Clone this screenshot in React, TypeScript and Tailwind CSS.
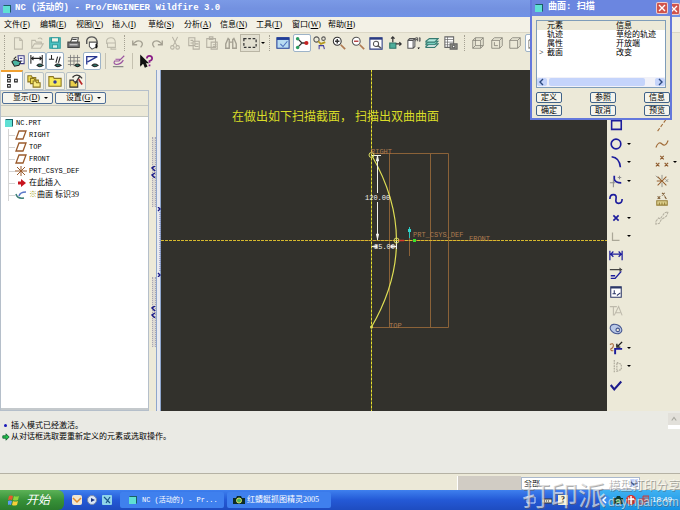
import type { ReactNode } from "react";

const FONT = "font-['Liberation_Serif','Noto_Sans_CJK_SC',sans-serif]";
const MONO = "font-['Liberation_Mono','Noto_Sans_CJK_SC',monospace]";

const MENUS = [
  ["文件", "F"],
  ["编辑", "E"],
  ["视图", "V"],
  ["插入", "I"],
  ["草绘", "S"],
  ["分析", "A"],
  ["信息", "N"],
  ["工具", "T"],
  ["窗口", "W"],
  ["帮助", "H"],
];

// Every toolbar glyph is drawn on a 16x16 grid
function Glyph({ children, color = "#555" }: { children: ReactNode; color?: string }) {
  return (
    <svg viewBox="0 0 16 16" className="size-3.5" fill="none" stroke={color} strokeWidth="1.2">
      {children}
    </svg>
  );
}

const ICONS: Record<string, ReactNode> = {
  new: <Glyph color="#bdbaab"><path d="M4 2h6l3 3v10H4zM10 2v3h3" /></Glyph>,
  open: <Glyph color="#bdbaab"><path d="M2 14V5h4l1 2h6v2M2 14l3-5h10l-3 5zM9 3q3-2 5 1" /></Glyph>,
  save: (
    <Glyph color="#2f9c9c">
      <path d="M2 2h12v12H2z" fill="#4cc4c4" />
      <path d="M4 2h8v5H4z" fill="#f3f3e6" />
      <path d="M5 10h6v4H5z" fill="#d9efe8" />
    </Glyph>
  ),
  print: (
    <Glyph color="#444">
      <path d="M4 7l2-5h7l-1 5" fill="#fff" />
      <path d="M1 7h13v6H1z" fill="#77777a" />
      <path d="M3 10h9M3 15h10" stroke="#ddd" />
      <path d="M6 4h5" />
    </Glyph>
  ),
  mail: (
    <Glyph color="#555">
      <path d="M2 9V5q1-4 6-4 6 0 6 8" strokeWidth="1.6" />
      <path d="M5 7h8l1 5-6 3-3-3z" fill="#fff" />
      <path d="M13 9v5" stroke="#111" strokeWidth="2" />
    </Glyph>
  ),
  link: <Glyph color="#bdbaab"><path d="M3 9V5q1-3 5-3 5 0 5 6M4 8h9v5H4zM8 13v2h6" /></Glyph>,
  undo: <Glyph color="#a39f91"><path d="M2 5v5h5M2 10q4-6 9-4 4 3 0 7" strokeWidth="1.5" /></Glyph>,
  redo: <Glyph color="#a39f91"><path d="M14 5v5H9M14 10Q10 4 5 6q-4 3 0 7" strokeWidth="1.5" /></Glyph>,
  cut: (
    <Glyph color="#b4b0a2">
      <path d="M5 1l5 10M11 1L6 11" />
      <circle cx="5" cy="13" r="2" />
      <circle cx="11" cy="13" r="2" />
    </Glyph>
  ),
  copy: <Glyph color="#b4b0a2"><path d="M2 2h7v9H2zM7 6h7v9H7zM9 9h4M9 12h4M4 5h3M4 8h3" /></Glyph>,
  paste: <Glyph color="#b4b0a2"><path d="M2 3h10v10H2zM5 1h4v3H5zM7 7h7v8H7zM9 10h4M9 12h4" /></Glyph>,
  find: (
    <Glyph color="#a5a193">
      <path d="M5 2L2 9v5h4V3M11 2l3 7v5h-4V3M6 7h4" strokeWidth="1.6" />
    </Glyph>
  ),
  box: <Glyph color="#333"><path d="M1 3h14v10H1z" strokeDasharray="3 2" strokeWidth="1.4" /></Glyph>,
  repaint: (
    <Glyph color="#223e98">
      <path d="M1 2h14v12H1z" fill="#b9dcf2" />
      <path d="M1 3h14" strokeWidth="3" />
      <path d="M5 9l3 3 5-6" stroke="#4c6fbd" />
    </Glyph>
  ),
  spin: (
    <Glyph color="#333">
      <path d="M3 3l5 5-5 5M8 8h5" strokeWidth="1.5" />
      <circle cx="3" cy="3" r="2" fill="#2a9d5f" stroke="none" />
      <circle cx="3" cy="13" r="2" fill="#2a9d5f" stroke="none" />
      <circle cx="13" cy="8" r="2.4" fill="#c62323" stroke="none" />
    </Glyph>
  ),
  orient: (
    <Glyph color="#555">
      <circle cx="4" cy="4" r="3" />
      <circle cx="12" cy="3" r="2" />
      <path d="M6 6l3 3 5-2" stroke="#b59a20" strokeWidth="2" />
      <path d="M7 15v-4h5l1 4" stroke="#4540a0" />
    </Glyph>
  ),
  zoomIn: (
    <Glyph color="#333">
      <circle cx="6" cy="6" r="4.5" fill="#fff" />
      <path d="M3.5 6h5M6 3.5v5" strokeWidth="1.6" />
      <path d="M10 10l5 5" stroke="#b07b52" strokeWidth="2" />
    </Glyph>
  ),
  zoomOut: (
    <Glyph color="#555">
      <circle cx="6" cy="6" r="4.5" fill="#fff" />
      <path d="M3.5 6h5" stroke="#b23a3a" strokeWidth="1.6" />
      <path d="M10 10l5 5" stroke="#b07b52" strokeWidth="2" />
    </Glyph>
  ),
  refit: (
    <Glyph color="#2a3b82">
      <path d="M1 2h14v13H1z" fill="#fff" />
      <path d="M1 3h14" strokeWidth="2.4" />
      <circle cx="8" cy="9" r="3" stroke="#555" />
      <path d="M10 11l4 3" stroke="#555" strokeWidth="1.6" />
    </Glyph>
  ),
  reorient: (
    <Glyph color="#333">
      <path d="M2 8h7v6H2z" fill="#4fae9b" stroke="#2d7468" />
      <path d="M5.500 1v6M3.500 3l2-2 2 2" strokeWidth="1.4" />
      <path d="M9 9h6M13 7l2 2-2 2" strokeWidth="1.4" />
    </Glyph>
  ),
  views: (
    <Glyph color="#555">
      <path d="M1 5l2-2h6v9l-2 2H1zM1 5h6v9M7 5l2-2" fill="#fff" />
      <path d="M10 6V2h2v4M10 4h2M14 2v4h1V2z" strokeWidth="1" />
      <path d="M12 13h3l-2 2z" fill="#111" stroke="none" />
    </Glyph>
  ),
  layers: (
    <Glyph color="#357b70">
      <path d="M1 12l4-3h10l-4 4H1z" fill="#fff" />
      <path d="M1 9l4-3h10l-4 4H1z" fill="#78d0c0" />
      <path d="M1 6l4-3h10l-4 4H1z" fill="#b5eadf" />
    </Glyph>
  ),
  manager: (
    <Glyph color="#666">
      <path d="M1 1h10v12H1z" fill="#fff" />
      <path d="M4 1v12M1 4h10M1 7h10M1 10h10" strokeWidth="0.8" />
      <path d="M7 9h8v6H7z" fill="#8b8b82" />
      <circle cx="11" cy="12" r="1.5" fill="#fff" />
    </Glyph>
  ),
  wire: <Glyph color="#7d7a70"><path d="M2 5h9v9H2zM5 2h9v9H5zM2 5l3-3M11 5l3-3M2 14l3-3M11 14l3-3" strokeWidth="0.9" /></Glyph>,
  hidden: <Glyph color="#7d7a70"><path d="M2 5h9v9H2zM5 2h9v9M2 5l3-3M11 5l3-3M11 14l3-3M5 7v4h4" strokeWidth="0.9" /></Glyph>,
  noHidden: <Glyph color="#7d7a70"><path d="M2 5h9v9H2zM2 5l3-3h9v9l-3 3M11 5l3-3" strokeWidth="0.9" /></Glyph>,
  sketchView: (
    <Glyph color="#3b3b86">
      <path d="M8 2h7v9H9zM10 5h3M10 8h3" fill="#fff" />
      <path d="M1 9q3-4 7-1l3 1-2 4-5 1z" stroke="#222" fill="#4bb5a0" />
      <path d="M3 6l3-3" stroke="#222" />
    </Glyph>
  ),
  dims: (
    <Glyph color="#222">
      <path d="M1 1v10M14 1v10M1 5h13M4 3L2 5l2 2M11 3l2 2-2 2" />
      <path d="M8 13q3-3 7 0-4 3-7 0z" fill="#2d7468" />
    </Glyph>
  ),
  constraints: (
    <Glyph color="#222">
      <path d="M1 6h6M4 1v5M9 10l2-7M12 10l2-7" />
      <path d="M8 13q3-3 7 0-4 3-7 0z" fill="#2d7468" />
    </Glyph>
  ),
  grid: (
    <Glyph color="#777">
      <path d="M4 1v13M8 1v13M12 1v9M1 4h14M1 8h14M1 12h7" strokeWidth="0.9" />
      <path d="M9 13q3-3 6 0-3 3-6 0z" fill="#2d7468" stroke="#222" />
    </Glyph>
  ),
  vertices: (
    <Glyph color="#26358f">
      <path d="M2 12V3h12L3 9" strokeWidth="1.5" />
      <path d="M8 13q3-3 7 0-4 3-7 0z" fill="#2d7468" stroke="#222" />
    </Glyph>
  ),
  sketcher: (
    <Glyph color="#9a52a0">
      <path d="M14 2L8 8H3q-2 3 2 4 5 0 8-5M4 6h5" strokeWidth="1.3" />
      <path d="M1 14.500h12" stroke="#777" />
    </Glyph>
  ),
  help: (
    <Glyph color="#111">
      <path d="M2 2v11l3-3 2 5 2-1-2-4h3z" fill="#111" />
      <path d="M9 5q0-3 3-3t3 3q0 2-3 3v2" stroke="#8a1e87" strokeWidth="2" />
      <path d="M11 12h2v2h-2z" fill="#8a1e87" stroke="none" />
    </Glyph>
  ),
  tree: <Glyph color="#222"><path d="M3 1h3v3H3zM3 6h3v3H3zM3 12h3v3H3zM11 6h3v3h-3z" /></Glyph>,
  folders: (
    <Glyph color="#8a7420">
      <path d="M1 2h4l1 2h4v5H1z" fill="#f0dc56" />
      <path d="M4 5h4l1 2h4v4H4z" fill="#f0dc56" />
      <path d="M7 8h3l1 2h4v5H7z" fill="#f8ea80" />
    </Glyph>
  ),
  favorites: (
    <Glyph color="#8a7420">
      <path d="M1 3h5l1 2h8v9H1z" fill="#f7ea58" />
      <circle cx="8" cy="9" r="2" fill="#303b9c" stroke="none" />
    </Glyph>
  ),
  connect: (
    <Glyph color="#333">
      <path d="M1 7h4l1 2h4v6H1z" fill="#e9cf4b" />
      <path d="M4 4q3-4 8-2l3 3M12 3l-5 8" strokeWidth="1.5" />
      <path d="M11 6l4 6" stroke="#b92a2a" strokeWidth="2" />
    </Glyph>
  ),
  rect: <Glyph color="#1c1c9c"><path d="M3 3h11v10H3z" strokeWidth="1.8" /></Glyph>,
  circle: <Glyph color="#1c1c9c"><circle cx="8" cy="8" r="5.5" strokeWidth="1.9" /></Glyph>,
  arc: <Glyph color="#1c1c9c"><path d="M3 2q9 1 10 12" strokeWidth="1.9" /></Glyph>,
  fillet: (
    <Glyph color="#1c1c9c">
      <path d="M6 2v4q1 4 8 4" strokeWidth="2" />
      <path d="M5 6v9M1 10h6M12 2v4M10 4h4" stroke="#8d8d8d" />
    </Glyph>
  ),
  spline: <Glyph color="#1c1c9c"><path d="M1 8q0-5 4-5t3 5 3 5 4-5" strokeWidth="1.9" /></Glyph>,
  point: <Glyph color="#1c1c9c"><path d="M5 5l6 6M11 5l-6 6" strokeWidth="1.9" /></Glyph>,
  corner: <Glyph color="#aaa797"><path d="M4 4v9h8" strokeWidth="1.4" /></Glyph>,
  dimension: <Glyph color="#1c1c9c"><path d="M1 3v11M15 3v11M2 7h12M5 4L2 7l3 3M11 4l3 3-3 3" strokeWidth="1.4" /></Glyph>,
  modify: (
    <Glyph color="#1c1c9c">
      <path d="M2 13h5l7-8M2 10h5" strokeWidth="1.7" />
      <path d="M1 3h14M12 1l2 2-2 2" stroke="#444" />
    </Glyph>
  ),
  constrain: (
    <Glyph color="#2d3868">
      <path d="M2 2h12v12H2z" fill="#fff" />
      <path d="M2 3h12" strokeWidth="2" />
      <path d="M4 10h4M6 6v4M9 12l4-3" />
    </Glyph>
  ),
  text: <Glyph color="#bdb9ab"><path d="M1 3h8M5 3v10M6 13l5-10 4 10M8 10h5" /></Glyph>,
  palette: (
    <Glyph color="#44558f">
      <ellipse cx="8" cy="8" rx="7" ry="5" transform="rotate(25 8 8)" fill="#b9c8e6" />
      <circle cx="10" cy="9" r="2" fill="#ece9d8" />
    </Glyph>
  ),
  trim: (
    <Glyph color="#1c1c9c">
      <path d="M7 15V9h8" strokeWidth="2.2" />
      <path d="M1 4q4-2 4 1T2 9q0 3 3 2" stroke="#a86636" />
      <path d="M15 1l-5 5M9 3v4h4" stroke="#222" strokeWidth="1.6" />
    </Glyph>
  ),
  mirror: <Glyph color="#a5a193"><path d="M6 1v14M9 4l5 2v6l-5 2z" strokeDasharray="2 1" /></Glyph>,
  check: <Glyph color="#1c1c8c"><path d="M2 8l4 5 8-9" strokeWidth="2.4" /></Glyph>,
  axis: <Glyph color="#a06a36"><path d="M3 15L13 1" strokeDasharray="4 2" /></Glyph>,
  curve: <Glyph color="#a06a36"><path d="M1 12q3-8 7-4t7-4" strokeWidth="1.3" /></Glyph>,
  points: <Glyph color="#8e5a2c"><path d="M6 1l4 4M10 1L6 5M1 9l4 4M5 9l-4 4M11 9l4 4M15 9l-4 4" strokeWidth="1.3" /></Glyph>,
  csys: (
    <Glyph color="#96602f">
      <path d="M3 3l10 10M13 3L3 13M2 8h7" strokeWidth="1.2" />
      <path d="M1 2l3 3M12 6l3 3M15 6l-3 3M8 1v5M8 10v5" stroke="#8d8b84" strokeWidth="1" />
    </Glyph>
  ),
  analysis: (
    <Glyph color="#96803a">
      <path d="M2 10h12v5H2zM5 12v3M8 12v3M11 12v3" fill="#ddd08e" />
      <path d="M3 5l3 3M6 5L3 8M8 1l3 3M11 1L8 4M11 5l2 3" stroke="#7a5830" />
    </Glyph>
  ),
  reference: <Glyph color="#b5b1a2"><path d="M1 12l3-4 2 1 5-7 4-1-2 5-6 4-2 4-4 1z" strokeDasharray="3 1" /></Glyph>,
};

type ToolProps = { icon: string; label: string; active?: boolean };

function Tool({ icon, label, active = false }: ToolProps) {
  return (
    <button
      type="button"
      aria-label={label}
      className={`flex size-[18px] shrink-0 items-center justify-center ${active ? "rounded-xs border border-[#9db3c8] bg-white" : ""}`}
    >
      {ICONS[icon]}
    </button>
  );
}

function Caret() {
  return <span className="border-x-2 border-t-2 border-x-transparent border-t-black" />;
}

function Separator() {
  return <span className="mx-1 h-4 w-px shrink-0 bg-[#c5c1b0]" />;
}

function Handle() {
  return <span className="mx-1 h-4 shrink-0 border-l border-dotted border-[#a5a193]" />;
}

function PartIcon() {
  return (
    <svg viewBox="0 0 10 10" className="size-2.5 shrink-0">
      <path d="M1 2l1-1h7v7L8 9H1z" fill="#1b5f64" />
      <path d="M1 2h7v7H1z" fill="#5fe0d4" />
    </svg>
  );
}

function CloseButton({ label }: { label: string }) {
  return (
    <button
      type="button"
      aria-label={label}
      className="flex size-3 shrink-0 items-center justify-center rounded-xs border border-white/70 bg-[#d0544c]"
    >
      <svg viewBox="0 0 8 8" className="size-2" stroke="#fff" strokeWidth="1.4">
        <path d="M1 1l6 6M7 1L1 7" />
      </svg>
    </button>
  );
}

function Toolbars() {
  return (
    <div className="bg-[#ece9d8]">
      <div className="flex h-5 items-center border-t border-[#dbd7c6]">
        <Handle />
        <div className="flex w-[111px] justify-between">
          <Tool icon="new" label="新建" />
          <Tool icon="open" label="打开" />
          <Tool icon="save" label="保存" />
          <Tool icon="print" label="打印" />
          <Tool icon="mail" label="发送" />
          <Tool icon="link" label="链接" />
        </div>
        <Handle />
        <div className="flex w-[111px] justify-between">
          <Tool icon="undo" label="撤消" />
          <Tool icon="redo" label="重做" />
          <Tool icon="cut" label="剪切" />
          <Tool icon="copy" label="复制" />
          <Tool icon="paste" label="粘贴" />
          <Tool icon="find" label="查找" />
        </div>
        <button
          type="button"
          aria-label="选取框"
          className="mr-px flex h-[18px] w-5 items-center justify-center border border-[#b9b5a4] bg-[#e2dfd0]"
        >
          {ICONS.box}
        </button>
        <Caret />
        <Handle />
        <div className="flex w-[186px] justify-between">
          <Tool icon="repaint" label="重画" />
          <Tool icon="spin" label="旋转中心" active />
          <Tool icon="orient" label="定向模式" />
          <Tool icon="zoomIn" label="放大" />
          <Tool icon="zoomOut" label="缩小" />
          <Tool icon="refit" label="重新调整" />
          <Tool icon="reorient" label="重定向" />
          <Tool icon="views" label="视图列表" />
          <Tool icon="layers" label="层" />
          <Tool icon="manager" label="视图管理器" />
        </div>
        <Handle />
        <div className="flex w-[74px] justify-between">
          <Tool icon="wire" label="线框" />
          <Tool icon="hidden" label="隐藏线" />
          <Tool icon="noHidden" label="无隐藏线" />
          <Tool icon="wire" label="着色" active />
        </div>
      </div>
      <div className="flex h-[18px] items-center">
        <Handle />
        <div className="flex w-[92px] justify-between">
          <Tool icon="sketchView" label="草绘视图" />
          <Tool icon="dims" label="显示尺寸" active />
          <Tool icon="constraints" label="显示约束" active />
          <Tool icon="grid" label="显示网格" />
          <Tool icon="vertices" label="显示顶点" active />
        </div>
        <Separator />
        <Tool icon="sketcher" label="草绘器" />
        <Separator />
        <Tool icon="help" label="上下文帮助" />
      </div>
    </div>
  );
}

function PlaneIcon() {
  return (
    <svg viewBox="0 0 12 10" className="h-2.5 w-3 shrink-0" fill="none" stroke="#9a5b2c" strokeWidth="1.3">
      <path d="M4 1h7L8 9H1z" />
    </svg>
  );
}

const TREE = [
  { name: "RIGHT", icon: <PlaneIcon /> },
  { name: "TOP", icon: <PlaneIcon /> },
  { name: "FRONT", icon: <PlaneIcon /> },
  {
    name: "PRT_CSYS_DEF",
    icon: (
      <svg viewBox="0 0 12 10" className="h-2.5 w-3 shrink-0" stroke="#9a5b2c">
        <path d="M2 1l8 8M10 1L2 9M6 0v10M0 5h12" />
      </svg>
    ),
  },
  {
    name: "在此插入",
    icon: (
      <svg viewBox="0 0 12 10" className="h-2.5 w-3 shrink-0" fill="#c8141e">
        <path d="M3 3.500h3V1l5 4-5 4V6.500H3z" />
      </svg>
    ),
  },
  {
    name: "曲面 标识39",
    marked: true,
    icon: (
      <svg viewBox="0 0 12 10" className="h-2.5 w-3 shrink-0" fill="none" strokeWidth="1.5">
        <path d="M1 4q1 5 8 4" stroke="#3e7f78" />
        <path d="M4 6q1-4 7-4" stroke="#5b78c8" />
      </svg>
    ),
  },
];

function ModelTree() {
  return (
    <aside className="flex w-[149px] shrink-0 flex-col bg-[#ece9d8]">
      <div className="flex h-5 items-end gap-px pl-px">
        <div className="flex h-5 w-[22px] items-center justify-center border-t-2 border-r border-t-[#f0a030] border-r-[#9db3c8] bg-white">
          {ICONS.tree}
        </div>
        {["folders", "favorites", "connect"].map((icon) => (
          <div
            key={icon}
            className="flex h-[18px] w-5 items-center justify-center rounded-t-xs border border-[#b8c2c6] bg-[#f4f2e6]"
          >
            {ICONS[icon]}
          </div>
        ))}
      </div>
      <div className="flex min-h-0 flex-1 flex-col border border-[#b5bfca]">
        <div className="flex h-3.5 items-center gap-0.5 pl-px">
          {[["显示", "D"], ["设置", "G"]].map(([label, key]) => (
            <button
              key={key}
              type="button"
              className="flex h-3 w-[51px] items-center justify-end gap-1 rounded-xs border border-[#4f6f98] bg-[#f6f5ee] pr-1 text-[8px] leading-none text-black"
            >
              <span>
                {label}(<u>{key}</u>)
              </span>
              <Caret />
            </button>
          ))}
        </div>
        <div className="h-3 shrink-0 border-t border-b border-[#c5c8c0]" />
        <ul className={`min-h-0 flex-1 border-b-2 border-[#c4c9cc] bg-white pl-[3px] ${MONO} text-[7px] text-black`}>
          <li>
            <div className="flex h-3 items-center gap-0.5">
              <PartIcon />
              NC.PRT
            </div>
            <ul className="ml-1 border-l border-[#d4d4d4]">
              {TREE.map((item) => (
                <li key={item.name} className="flex h-3 items-center">
                  <span className="h-px w-1.5 bg-[#d4d4d4]" />
                  {item.icon}
                  <span className={`ml-0.5 leading-3 ${/^[A-Z_]+$/.test(item.name) ? "text-[7px]" : `${FONT} text-[8px]`}`}>
                    {item.marked && <span className="text-[#a3a51c]">※</span>}
                    {item.name}
                  </span>
                </li>
              ))}
            </ul>
          </li>
        </ul>
      </div>
    </aside>
  );
}

function SashGrip() {
  return (
    <div className="flex h-[70px] w-1 flex-col items-center justify-center border-x border-dotted border-[#a9a5b4] bg-[#dcd9d2]">
      <svg viewBox="0 0 6 12" className="h-3 w-1.5 shrink-0" fill="none" stroke="#1b1b88" strokeWidth="1.5">
        <path d="M4 0L1 2l3 3M4 7L1 9l3 3" />
      </svg>
    </div>
  );
}

function Sash() {
  return (
    <div className="flex w-3 shrink-0 justify-between bg-[#ece9d8] pl-[3px]">
      <div className="flex flex-col gap-[70px] pt-[67px]">
        <SashGrip />
        <SashGrip />
      </div>
      <div className="flex w-[5px] flex-col items-center border-x border-[#8fa6cc] bg-[#e8eaf0] pt-[137px]">
        <svg viewBox="0 0 4 70" className="h-[70px] w-1 shrink-0" fill="none" stroke="#1b1b88">
          <path d="M1 0l2 2-2 2M1 66l2 2-2 2" strokeWidth="1.4" />
          <path d="M3 5v60" strokeDasharray="1 1" stroke="#7777ac" />
        </svg>
      </div>
    </div>
  );
}

// Units are model-window pixels with the origin at the window's top left
function ModelView() {
  return (
    <main className="min-w-0 flex-1 bg-[#32312c]">
      <svg viewBox="0 0 446 341" className="h-full w-full" preserveAspectRatio="xMidYMid slice">
        <g fill="none" stroke="#8b6238">
          <path d="M210.500 83.500h77v174h-77" />
          <path d="M228.500 83v174M269.500 83v174" />
          <path d="M189 170.500h150" stroke="#a0642e" />
          <path d="M248.500 157v29" />
        </g>
        <path d="M0 170.500h446" stroke="#d6b92e" strokeDasharray="3 1" />
        <path d="M210.500 0v341" stroke="#8e8a20" />
        <path d="M210.500 0v341" stroke="#e6e032" strokeDasharray="2 2" />
        <path d="M210.500 85Q260.500 171 210.500 257" fill="none" stroke="#dede54" strokeWidth="1.2" />
        <g stroke="#f2f2ec" fill="#f2f2ec">
          <path d="M216.500 86v37M216.500 132v38M211 85.500h9" fill="none" />
          <path d="M216.500 86l1 5h-2zM216.500 169l1-5h-2zM211 176.500l5-1v2zM235 176.500l-5-1v2z" />
          <path d="M235.500 171v8" />
        </g>
        <g fill="none" stroke="#d8d860">
          <circle cx="210.500" cy="85" r="2.500" />
          <circle cx="235.500" cy="170.500" r="2.500" />
        </g>
        <path d="M238 170.500h5" stroke="#d83a2c" strokeWidth="1.500" />
        <circle cx="210.500" cy="257" r="1.500" fill="#dede54" />
        <path d="M248.500 157v11" stroke="#2fc4bd" />
        <rect x="247" y="159" width="3" height="3" fill="#2fd4cd" />
        <rect x="252" y="169" width="3" height="3" fill="#37e52c" />
        <g className={MONO} fontSize="7" fill="#ae7c50">
          <text x="210" y="84">RIGHT</text>
          <text x="228" y="258">TOP</text>
          <text x="252" y="167">PRT_CSYS_DEF</text>
          <text x="308" y="171">FRONT</text>
        </g>
        <g className={MONO} fontSize="7" fill="#f2f2ec">
          <text x="204" y="130">120.00</text>
          <text x="213" y="179">35.00</text>
        </g>
        <text x="71" y="51" fontSize="12" fill="#d9dc28" className={FONT}>
          在做出如下扫描截面， 扫描出双曲曲面
        </text>
      </svg>
    </main>
  );
}

type SideTool = { icon: string; label: string; more?: boolean };

const SKETCH_TOOLS: SideTool[] = [
  { icon: "rect", label: "矩形" },
  { icon: "circle", label: "圆", more: true },
  { icon: "arc", label: "弧", more: true },
  { icon: "fillet", label: "圆角", more: true },
  { icon: "spline", label: "样条" },
  { icon: "point", label: "点", more: true },
  { icon: "corner", label: "使用边", more: true },
  { icon: "dimension", label: "尺寸" },
  { icon: "modify", label: "修改" },
  { icon: "constrain", label: "约束" },
  { icon: "text", label: "文本" },
  { icon: "palette", label: "调色板" },
  { icon: "trim", label: "修剪", more: true },
  { icon: "mirror", label: "镜像", more: true },
  { icon: "check", label: "完成" },
];

const DATUM_TOOLS: SideTool[] = [
  { icon: "axis", label: "基准轴" },
  { icon: "curve", label: "基准曲线" },
  { icon: "points", label: "基准点", more: true },
  { icon: "csys", label: "坐标系" },
  { icon: "analysis", label: "分析特征" },
  { icon: "reference", label: "参照" },
];

function ToolColumn({ tools, className }: { tools: SideTool[]; className: string }) {
  return (
    <div className={`flex flex-col justify-between ${className}`}>
      {tools.map((tool) => (
        <div key={tool.icon} className="flex items-center gap-0.5">
          <Tool icon={tool.icon} label={tool.label} />
          {tool.more && <Caret />}
        </div>
      ))}
    </div>
  );
}

function SideTools() {
  return (
    <aside className="flex w-[73px] shrink-0 justify-between bg-[#ece9d8] pt-[46px]">
      <ToolColumn tools={SKETCH_TOOLS} className="h-[278px]" />
      <ToolColumn tools={DATUM_TOOLS} className="h-[111px] w-[27px]" />
    </aside>
  );
}

function DialogButton({ children }: { children: ReactNode }) {
  return (
    <button
      type="button"
      className="h-[11px] w-[26px] rounded-xs border border-[#3f6288] bg-[#f5f4ec] text-[8px] leading-[9px] text-black"
    >
      {children}
    </button>
  );
}

function SweepDialog() {
  const rows = [
    ["", "轨迹", "草绘的轨迹"],
    ["", "属性", "开放端"],
    [">", "截面", "改变"],
  ];

  return (
    <section className="absolute top-0 right-2 w-[142px] border-2 border-t-0 border-[#6478dc] bg-[#ece9d8]">
      <header className="flex h-4 items-center gap-1 bg-[#6b86e0] px-0.5 text-[9px] text-white">
        <PartIcon />
        <h2 className={`flex-1 ${MONO} font-bold`}>曲面: 扫描</h2>
        <CloseButton label="关闭对话框" />
      </header>
      <div className="pt-1 pb-0.5 pl-1">
        <div className="mr-1 border border-[#7f9db9] bg-white text-[8px] leading-[9px] text-black">
          <table className="w-full table-fixed border-collapse text-left">
            <thead className="bg-[#ece9d8]">
              <tr>
                <th className="w-2.5 p-0" />
                <th className="w-[69px] p-0 font-normal">元素</th>
                <th className="p-0 font-normal">信息</th>
              </tr>
            </thead>
            <tbody>
              {rows.map(([mark, name, info]) => (
                <tr key={name}>
                  <td className="p-0 pl-0.5">{mark}</td>
                  <td className="p-0">{name}</td>
                  <td className="p-0">{info}</td>
                </tr>
              ))}
            </tbody>
          </table>
          <div className="mt-5 flex h-2.5 items-center gap-0.5 bg-[#f1f1f8]">
            <button type="button" aria-label="向左滚动" className="flex h-2 w-2.5 items-center justify-center rounded-xs bg-[#c5d4fb]">
              <svg viewBox="0 0 6 8" className="h-2 w-1.5" fill="none" stroke="#2e4a80" strokeWidth="1.4">
                <path d="M4 1L1 4l3 3" />
              </svg>
            </button>
            <div className="h-2 flex-1 rounded-xs bg-[#c5d4fb]" />
            <span className="w-1.5" />
            <button type="button" aria-label="向右滚动" className="flex h-2 w-2.5 items-center justify-center rounded-xs bg-[#c5d4fb]">
              <svg viewBox="0 0 6 8" className="h-2 w-1.5" fill="none" stroke="#2e4a80" strokeWidth="1.4">
                <path d="M2 1l3 3-3 3" />
              </svg>
            </button>
          </div>
        </div>
        <div className="mt-1 flex justify-between">
          <DialogButton>定义</DialogButton>
          <DialogButton>参照</DialogButton>
          <DialogButton>信息</DialogButton>
        </div>
        <div className="mt-0.5 flex justify-between">
          <DialogButton>确定</DialogButton>
          <DialogButton>取消</DialogButton>
          <DialogButton>预览</DialogButton>
        </div>
      </div>
    </section>
  );
}

function MessageLog() {
  return (
    <div className="flex h-[63px] shrink-0 justify-between border-b border-[#b5b2a4] bg-[#eaeae4] text-[8px] leading-[11px] text-black">
      <ul className="pt-[9px] pl-0.5">
        <li className="flex items-center">
          <span className="mr-1 ml-0.5 size-[3px] rounded-full bg-[#1818b8]" />
          插入模式已经激活。
        </li>
        <li className="flex items-center">
          <svg viewBox="0 0 10 10" className="size-2 shrink-0" fill="#22c04c" stroke="#0e5a2c">
            <path d="M1 3.500h4V1l4 4-4 4V6.500H1z" />
          </svg>
          <span className="ml-px">从对话框选取要重新定义的元素或选取操作。</span>
        </li>
      </ul>
      <button type="button" aria-label="向上滚动" className="mt-0.5 flex h-4 w-3 items-center justify-center border-b-4 border-white bg-[#e2e0da]">
        <svg viewBox="0 0 8 8" className="size-1.5" fill="none" stroke="#a8a8a0" strokeWidth="1.5">
          <path d="M1 6l3-4 3 4" />
        </svg>
      </button>
    </div>
  );
}

function StatusBar() {
  return (
    <div className="flex h-4 shrink-0 items-end justify-end bg-[#ece9d8] pr-10">
      <div className="h-3.5 w-16 border-l border-white bg-[#d1ccc4]" />
      <div className="relative w-[119px]">
        <select
          aria-label="过滤器"
          className="block h-[13px] w-full appearance-none border border-[#a9b8cc] bg-white pl-0.5 text-[8px] leading-none text-black"
        >
          <option>全部</option>
        </select>
        <svg viewBox="0 0 8 8" className="pointer-events-none absolute top-0.5 right-0.5 size-2 bg-[#c5d4fb]" fill="none" stroke="#3a5490" strokeWidth="1.5">
          <path d="M1 3l3 3 3-3" />
        </svg>
      </div>
    </div>
  );
}

function Taskbar() {
  return (
    <footer className="flex h-5 shrink-0 items-center bg-linear-to-b from-[#3f80ee] via-[#2459d6] to-[#1e4cc0] text-white">
      <button
        type="button"
        className="flex h-5 w-16 items-center gap-1.5 rounded-r-md bg-linear-to-b from-[#5cb257] via-[#379138] to-[#2b7c2d] pl-2"
      >
        <svg viewBox="0 0 12 12" className="size-3">
          <path d="M1 2q2-1 4 0L4 6Q2 5 0 6z" fill="#e8582c" />
          <path d="M6 2q2 1 5 0l-1 4q-3 1-5 0z" fill="#8cd63c" />
          <path d="M0 7q2-1 4 0l-1 4q-2-1-3 0z" fill="#5c9cf2" />
          <path d="M5 7q2 1 5 0l-1 4q-3 1-5 0z" fill="#f6cf38" />
        </svg>
        <span className="text-[12px] leading-none italic">开始</span>
      </button>
      <div className="ml-2 flex gap-[5px]">
        <svg viewBox="0 0 10 10" className="size-2.5">
          <rect width="10" height="10" rx="2" fill="#f1e6d0" />
          <path d="M1 3l4 4 4-4" stroke="#e08a2c" strokeWidth="1.5" fill="none" />
        </svg>
        <svg viewBox="0 0 10 10" className="size-2.5">
          <circle cx="5" cy="5" r="4.500" fill="#dbe7f6" stroke="#7c8ca8" />
          <path d="M4 3l4 2-4 2z" fill="#1d3480" />
        </svg>
        <svg viewBox="0 0 10 10" className="size-2.5">
          <rect width="10" height="10" rx="1" fill="#8fd4ea" />
          <path d="M2 2l6 6M8 2L4 8" stroke="#1a5488" strokeWidth="1.2" />
        </svg>
      </div>
      <button type="button" className={`ml-2 flex h-4 w-[104px] items-center gap-1 rounded-xs bg-[#3f80ee] pl-2 ${MONO} text-[7px]`}>
        <PartIcon />
        NC (活动的) - Pr...
      </button>
      <button type="button" className={`ml-[3px] flex h-4 w-[104px] items-center gap-0.5 rounded-xs bg-[#3f80ee] pl-1.5 ${FONT} text-[8px]`}>
        <svg viewBox="0 0 12 10" className="h-2.5 w-3">
          <path d="M0 3h3l1-2h4l1 2h3v6H0z" fill="#0c2c28" />
          <circle cx="6" cy="5.500" r="2.500" fill="#4fb45c" stroke="#e4dc6a" />
        </svg>
        红蜻蜓抓图精灵2005
      </button>
      <div className="ml-auto flex items-center gap-1.5 pr-8">
        <svg viewBox="0 0 10 10" className="size-2.5">
          <path d="M1 2h8v6H1z" fill="none" stroke="#cfe0fb" />
        </svg>
        <svg viewBox="0 0 10 10" className="size-2.5">
          <path d="M0 4h10v4H0z" fill="#e8e4d8" stroke="#333" />
          <path d="M2 6h6" stroke="#333" strokeDasharray="1 1" />
        </svg>
        <span className="flex size-2.5 items-center justify-center bg-[#f6f3d4] text-[8px] font-bold text-[#222]">?</span>
      </div>
      <div className="flex h-5 w-20 items-center justify-end bg-linear-to-b from-[#3fb2f2] to-[#1290e2]">
        <div className="flex flex-1 items-center gap-[3px]">
          <svg viewBox="0 0 10 10" className="size-2.5">
            <circle cx="5" cy="5" r="5" fill="#3c90f0" />
            <path d="M6 2L3 5l3 3" stroke="#fff" strokeWidth="1.500" fill="none" />
          </svg>
          <svg viewBox="0 0 10 10" className="size-2.5">
            <path d="M0 3h3l1-2h3l1 2h2v6H0z" fill="#0c3a30" />
            <circle cx="5" cy="6" r="2" fill="#4fb45c" />
          </svg>
          <svg viewBox="0 0 10 10" className="size-2.5">
            <circle cx="5" cy="5" r="5" fill="#d8342c" />
            <path d="M5 1v8M2 4h6" stroke="#fff" strokeWidth="1.500" />
          </svg>
          <svg viewBox="0 0 10 10" className="size-2.5">
            <path d="M0 4h6v5H0zM4 1h6v5H4z" fill="#7a88a8" stroke="#c23c40" />
          </svg>
        </div>
        <time className="pr-2 font-['Liberation_Sans',sans-serif] text-[8px]">18:49</time>
      </div>
    </footer>
  );
}

function SiteMark() {
  return (
    <div className="pointer-events-none absolute right-0 bottom-0 flex items-end gap-0.5 text-white/60 [text-shadow:1px_1px_0_rgba(90,90,90,0.5)]">
      <span className="font-['Noto_Sans_CJK_SC',sans-serif] text-[28px] leading-8">打印派</span>
      <span className="flex flex-col font-['Liberation_Sans','Noto_Sans_CJK_SC',sans-serif] text-[12px] leading-4">
        <span>模型打印分享</span>
        <span>dayinpai.com</span>
      </span>
    </div>
  );
}

export default function App() {
  return (
    <div className={`relative flex h-screen flex-col overflow-hidden bg-[#ece9d8] ${FONT}`}>
      <header className="flex h-[17px] shrink-0 items-center justify-between bg-linear-to-b from-[#7b9ae6] via-[#7391e0] to-[#6f92e6] pl-0.5 text-white">
        <div className="flex items-center gap-[3px]">
          <PartIcon />
          <h1 className={`${MONO} text-[9px] leading-none font-bold`}>NC (活动的) - Pro/ENGINEER Wildfire 3.0</h1>
        </div>
        <CloseButton label="关闭" />
      </header>
      <nav className="flex h-[15px] shrink-0 items-center bg-[#f3f1e6] pl-1 text-[8px] leading-none text-black">
        {MENUS.map(([label, key]) => (
          <button key={key} type="button" className="w-9 text-left whitespace-nowrap">
            {label}(<u>{key}</u>)
          </button>
        ))}
      </nav>
      <Toolbars />
      <div className="flex min-h-0 flex-1">
        <ModelTree />
        <Sash />
        <ModelView />
        <SideTools />
      </div>
      <MessageLog />
      <StatusBar />
      <Taskbar />
      <SweepDialog />
      <SiteMark />
    </div>
  );
}
